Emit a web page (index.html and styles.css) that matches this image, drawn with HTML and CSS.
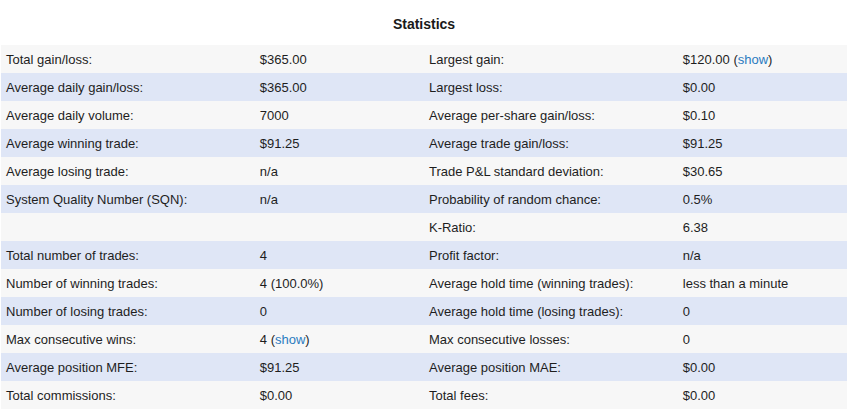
FILE: index.html
```html
<!DOCTYPE html>
<html>
<head>
<meta charset="utf-8">
<link rel="stylesheet" href="styles.css">
</head>
<body>
<div class="wrap">
  <h2 class="title">Statistics</h2>
  <table class="stats">
    <colgroup><col class="c-label"><col class="c-val"><col class="c-label"><col class="c-val"></colgroup>
    <tbody>
      <tr><td>Total gain/loss:</td><td>$365.00</td><td>Largest gain:</td><td>$120.00 (<a href="#">show</a>)</td></tr>
      <tr><td>Average daily gain/loss:</td><td>$365.00</td><td>Largest loss:</td><td>$0.00</td></tr>
      <tr><td>Average daily volume:</td><td>7000</td><td>Average per-share gain/loss:</td><td>$0.10</td></tr>
      <tr><td>Average winning trade:</td><td>$91.25</td><td>Average trade gain/loss:</td><td>$91.25</td></tr>
      <tr><td>Average losing trade:</td><td>n/a</td><td>Trade P&amp;L standard deviation:</td><td>$30.65</td></tr>
      <tr><td>System Quality Number (SQN):</td><td>n/a</td><td>Probability of random chance:</td><td>0.5%</td></tr>
      <tr><td></td><td></td><td>K-Ratio:</td><td>6.38</td></tr>
      <tr><td>Total number of trades:</td><td>4</td><td>Profit factor:</td><td>n/a</td></tr>
      <tr><td>Number of winning trades:</td><td>4 (100.0%)</td><td>Average hold time (winning trades):</td><td>less than a minute</td></tr>
      <tr><td>Number of losing trades:</td><td>0</td><td>Average hold time (losing trades):</td><td>0</td></tr>
      <tr><td>Max consecutive wins:</td><td>4 (<a href="#">show</a>)</td><td>Max consecutive losses:</td><td>0</td></tr>
      <tr><td>Average position MFE:</td><td>$91.25</td><td>Average position MAE:</td><td>$0.00</td></tr>
      <tr><td>Total commissions:</td><td>$0.00</td><td>Total fees:</td><td>$0.00</td></tr>
    </tbody>
  </table>
</div>
</body>
</html>
```
FILE: styles.css
```css
html, body {
  margin: 0;
  padding: 0;
  background: #ffffff;
}
body {
  font-family: "Liberation Sans", Arial, Helvetica, sans-serif;
  font-size: 13px;
  color: #1e1e1e;
}
.wrap {
  width: 846px;
  margin-left: 1px;
}
.title {
  margin: 0;
  height: 45px;
  padding-top: 16px;
  box-sizing: border-box;
  text-align: center;
  font-size: 14px;
  font-weight: bold;
  line-height: 17px;
  color: #1a1a1a;
}
.stats {
  width: 846px;
  border-collapse: collapse;
  table-layout: fixed;
}
.c-label { width: 30%; }
.c-val { width: 20%; }
.stats td {
  height: 28px;
  padding: 0 5px;
  box-sizing: border-box;
  vertical-align: middle;
  white-space: nowrap;
}
.stats tr:nth-child(odd) { background: #f7f7f7; }
.stats tr:nth-child(even) { background: #dfe6f6; }
.stats a {
  color: #2b7bc0;
  text-decoration: none;
}
```
